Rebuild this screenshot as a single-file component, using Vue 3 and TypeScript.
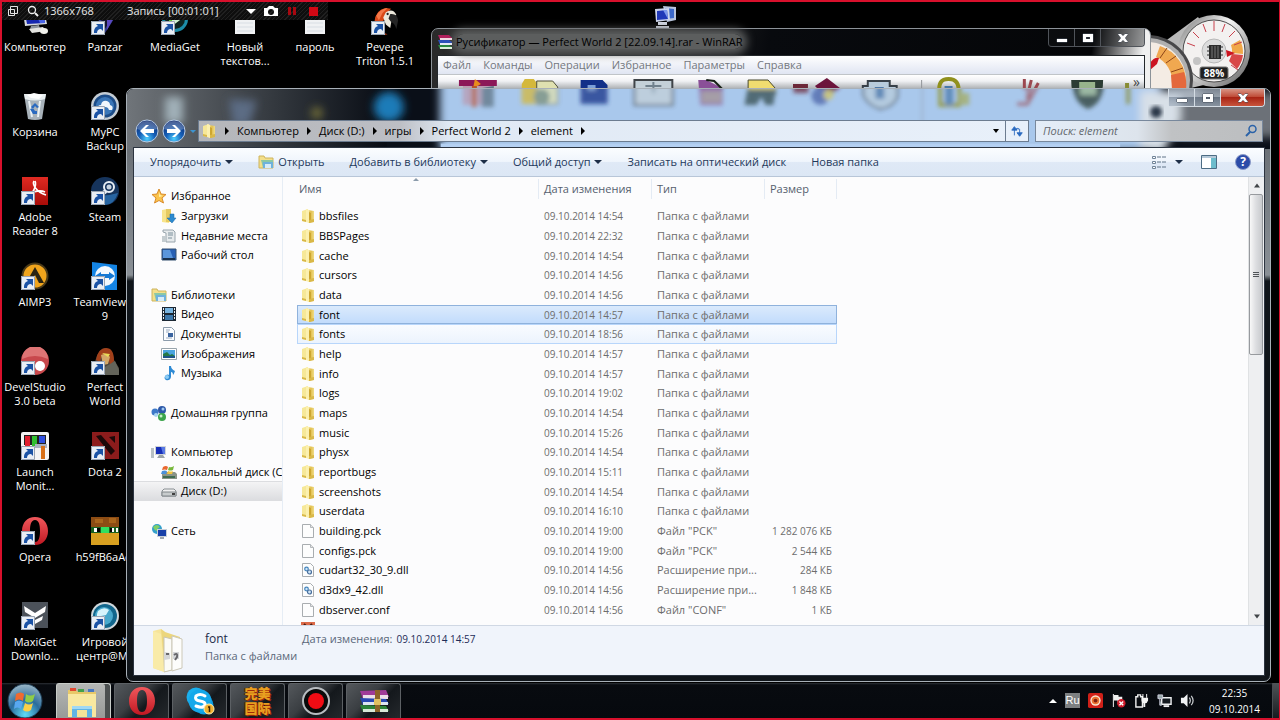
<script setup lang="ts">
import { ref } from 'vue'

interface Shortcut { label: string; icon: string; arrow?: boolean }
interface NavItem { label: string; icon: string; level?: number; active?: boolean; gap?: boolean }
interface FileRow { name: string; date: string; type: string; size?: string; icon: string; state?: string }

const columns: Shortcut[][] = [
  [
    { label: 'Компьютер', icon: 'computer' },
    { label: 'Корзина', icon: 'bin' },
    { label: 'Adobe\nReader 8', icon: 'adobe', arrow: true },
    { label: 'AIMP3', icon: 'aimp', arrow: true },
    { label: 'DevelStudio\n3.0 beta', icon: 'devel', arrow: true },
    { label: 'Launch\nMonit...', icon: 'launch', arrow: true },
    { label: 'Opera', icon: 'opera', arrow: true },
    { label: 'MaxiGet\nDownlo...', icon: 'maxi', arrow: true },
  ],
  [
    { label: 'Panzar', icon: 'panzar', arrow: true },
    { label: 'MyPC\nBackup', icon: 'mypc', arrow: true },
    { label: 'Steam', icon: 'steam', arrow: true },
    { label: 'TeamViewer\n9', icon: 'team', arrow: true },
    { label: 'Perfect\nWorld', icon: 'perfect', arrow: true },
    { label: 'Dota 2', icon: 'dota', arrow: true },
    { label: 'h59fB6aAeI', icon: 'skin' },
    { label: 'Игровой\nцентр@Ma', icon: 'game', arrow: true },
  ],
  [{ label: 'MediaGet', icon: 'media', arrow: true }],
  [{ label: 'Новый\nтекстов...', icon: 'text' }],
  [{ label: 'пароль', icon: 'text' }],
  [{ label: 'Pevepe\nTriton 1.5.1', icon: 'parrot', arrow: true }],
]

const rarMenu = ['Файл', 'Команды', 'Операции', 'Избранное', 'Параметры', 'Справка']
const crumbs = ['Компьютер', 'Диск (D:)', 'игры', 'Perfect World 2', 'element']
const commands = [
  { label: 'Упорядочить', drop: true },
  { label: 'Открыть', icon: 'library' },
  { label: 'Добавить в библиотеку', drop: true },
  { label: 'Общий доступ', drop: true },
  { label: 'Записать на оптический диск' },
  { label: 'Новая папка' },
]

const nav: NavItem[] = [
  { label: 'Избранное', icon: 'star' },
  { label: 'Загрузки', icon: 'downloads', level: 1 },
  { label: 'Недавние места', icon: 'recent', level: 1 },
  { label: 'Рабочий стол', icon: 'screen', level: 1 },
  { label: '', icon: '', gap: true },
  { label: 'Библиотеки', icon: 'library' },
  { label: 'Видео', icon: 'video', level: 1 },
  { label: 'Документы', icon: 'document', level: 1 },
  { label: 'Изображения', icon: 'picture', level: 1 },
  { label: 'Музыка', icon: 'music', level: 1 },
  { label: '', icon: '', gap: true },
  { label: 'Домашняя группа', icon: 'homegroup' },
  { label: '', icon: '', gap: true },
  { label: 'Компьютер', icon: 'pc' },
  { label: 'Локальный диск (C:)', icon: 'sysdisk', level: 1 },
  { label: 'Диск (D:)', icon: 'disk', level: 1, active: true },
  { label: '', icon: '', gap: true },
  { label: 'Сеть', icon: 'network' },
]

const folder = (name: string, time: string, state = ''): FileRow => ({
  name, date: `09.10.2014 ${time}`, type: 'Папка с файлами', icon: 'folder', state,
})
const files: FileRow[] = [
  folder('bbsfiles', '14:54'),
  folder('BBSPages', '22:32'),
  folder('cache', '14:54'),
  folder('cursors', '14:56'),
  folder('data', '14:56'),
  folder('font', '14:57', 'selected'),
  folder('fonts', '18:56', 'hovered'),
  folder('help', '14:57'),
  folder('info', '14:57'),
  folder('logs', '19:02'),
  folder('maps', '14:54'),
  folder('music', '15:26'),
  folder('physx', '14:54'),
  folder('reportbugs', '15:11'),
  folder('screenshots', '14:54'),
  folder('userdata', '16:10'),
  { name: 'building.pck', date: '09.10.2014 19:00', type: 'Файл "PCK"', size: '1 282 076 КБ', icon: 'file' },
  { name: 'configs.pck', date: '09.10.2014 19:00', type: 'Файл "PCK"', size: '2 544 КБ', icon: 'file' },
  { name: 'cudart32_30_9.dll', date: '09.10.2014 14:56', type: 'Расширение при...', size: '284 КБ', icon: 'dll' },
  { name: 'd3dx9_42.dll', date: '09.10.2014 14:56', type: 'Расширение при...', size: '1 848 КБ', icon: 'dll' },
  { name: 'dbserver.conf', date: '09.10.2014 14:56', type: 'Файл "CONF"', size: '1 КБ', icon: 'file' },
]

const query = ref('')
const tasks = [
  { name: 'Проводник', icon: 'explorer', current: true },
  { name: 'Opera', icon: 'opera' },
  { name: 'Skype', icon: 'skype' },
  { name: 'Perfect World', icon: '' },
  { name: 'Запись экрана', icon: 'record' },
  { name: 'WinRAR', icon: 'books' },
]
const tray = ['trayred', 'trayflag', 'trayplug', 'traynet', 'traysound']
</script>

<template>
  <svg class="defs" aria-hidden="true">
    <defs>
      <linearGradient id="gFolder" x1="0" x2="1"><stop offset="0" stop-color="#f4e08a" /><stop offset=".5" stop-color="#e2c050" /><stop offset="1" stop-color="#efdc88" /></linearGradient>
      <radialGradient id="gBlue" cx=".5" cy=".85" r=".8"><stop offset="0" stop-color="#4fd0ff" /><stop offset=".45" stop-color="#1660b8" /><stop offset="1" stop-color="#0d2a70" /></radialGradient>
      <radialGradient id="gOrb" cx=".5" cy=".9" r=".9"><stop offset="0" stop-color="#5fdcf8" /><stop offset=".5" stop-color="#2a6c9c" /><stop offset="1" stop-color="#9cb8c8" /></radialGradient>
      <linearGradient id="gOpera" x1="0" y1="0" x2="0" y2="1"><stop offset="0" stop-color="#f0585c" /><stop offset="1" stop-color="#c01822" /></linearGradient>
      <linearGradient id="gRed" x1="0" y1="0" x2="0" y2="1"><stop offset="0" stop-color="#e02a22" /><stop offset="1" stop-color="#a80c08" /></linearGradient>
      <linearGradient id="gSilver" x1="0" y1="0" x2="1" y2="1"><stop offset="0" stop-color="#6c6c6c" /><stop offset=".4" stop-color="#f4f4f4" /><stop offset="1" stop-color="#5a5a5a" /></linearGradient>
      <linearGradient id="gLeft" x1="0" x2="1"><stop offset="0" stop-color="#70757a" /><stop offset=".6" stop-color="#30353b" /><stop offset="1" stop-color="#080c14" /></linearGradient>
      <filter id="soft" x="-10%" y="-30%" width="120%" height="160%"><feGaussianBlur stdDeviation="4" /></filter>
    </defs>

    <symbol id="shortcut" viewBox="0 0 14 14"><path d="M0 0h14v14H0z" fill="#e9eef5" /><path d="M.5.5h13v13H.5z" fill="none" stroke="#9aa4b2" /><path d="M3 12c0-4 1-6 4-7L5 3h7v7L10 8c-3 0-4 2-4 4z" fill="#1b52a4" /></symbol>

    <symbol id="computer" viewBox="0 0 28 28"><path d="M2 4l21-2 3 15-22 2z" fill="#d5d9de" /><path d="M4 6l18-2 2 12-18 1z" fill="#1527b0" /><path d="M14 5l8-1 2 12-5 0z" fill="#4a64e8" /><path d="M10 19l8-1 1 4H9z" fill="#8c949c" /><path d="M8 22l14-2 3 4-14 2z" fill="#e4e4e0" /><ellipse cx="23" cy="24" rx="4" ry="3" fill="#f1f1ec" /></symbol>
    <symbol id="bin" viewBox="0 0 28 28"><path d="M3 2h22l-4 25q-7 2-14 0z" fill="#a8b2ba" /><path d="M3 2h22l-1 5q-10 3-20 0z" fill="#e8eef0" /><path d="M6 3l7-2 9 2-4 4-8-1z" fill="#fff" /><path d="M8 9l3 16M19 9l-2 16" stroke="#e8f0f4" stroke-width="2" /><path d="M10 15l4-4 4 4-2 1-2-2-2 3zM9 17l3 5h4v-3h-2l-2-3z" fill="#2a6ac0" /></symbol>
    <symbol id="adobe" viewBox="0 0 28 28"><path d="M1 0h26v28H1z" fill="url(#gRed)" /><path d="M13 4c-2 3 2 11 12 14M14 4c2 4-2 13-8 18M8 17c6-3 12-4 16-2" fill="none" stroke="#fff" stroke-width="1.6" /></symbol>
    <symbol id="aimp" viewBox="0 0 28 28"><circle cx="14" cy="14" r="12.500" fill="#f0a41c" stroke="#4a3a18" stroke-width="2" /><path d="M14 5l9 16h-5l-4-8-4 8H5z" fill="#2a2412" /></symbol>
    <symbol id="devel" viewBox="0 0 28 28"><circle cx="14" cy="14" r="14" fill="#c8484c" /><path d="M1 12A13 13 0 0 1 27 12Q14 6 1 12" fill="#de7474" /><circle cx="19" cy="19" r="5" fill="#fff" /></symbol>
    <symbol id="launch" viewBox="0 0 28 28"><rect width="28" height="28" rx="2" fill="#f4f4f4" /><path d="M3 3h22v10H3z" fill="#222" /><path d="M4 4h5v10H4z" fill="#e02030" /><path d="M11 4h5v12h-5z" fill="#30c030" /><path d="M18 4h6v7h-6z" fill="#3050e0" /><path d="M14 12h12v4H14z" fill="#a8b0c0" /><path d="M20 14h4v13h-4z" fill="#d87018" /></symbol>
    <symbol id="opera" viewBox="0 0 28 28"><path fill-rule="evenodd" d="M14 0C6 0 1 6 1 14s5 14 13 14 13-6 13-14S22 0 14 0zm0 3c4 0 5 5 5 11s-1 11-5 11-5-5-5-11 1-11 5-11z" fill="url(#gOpera)" /></symbol>
    <symbol id="maxi" viewBox="0 0 28 28"><path d="M1 0h26v26H1z" fill="#4c525a" /><path d="M3 4l11 7 11-7-1 6-10 6L4 10zM6 14l8 4 8-4-1 4-7 4-7-4z" fill="#fff" /></symbol>
    <symbol id="panzar" viewBox="0 0 28 28"><path d="M2 2l26 2-14 22z" fill="#343a8c" /><path d="M8 5l17 1-12 17z" fill="#14162e" /><path d="M16 8l9-1-9 16z" fill="#5a48c0" /></symbol>
    <symbol id="mypc" viewBox="0 0 28 28"><circle cx="14" cy="14" r="14" fill="#c4ccd4" /><circle cx="14" cy="14" r="11.500" fill="#1c4c88" /><circle cx="14" cy="14" r="9" fill="#3a76b8" /><path d="M7 17q-1-4 3-4 1-5 6-4 3 1 3 4 4 1 2 5h-3l-1-2q-3-2-5 0l-1 2z" fill="#f0f6fc" /></symbol>
    <symbol id="steam" viewBox="0 0 28 28"><circle cx="14" cy="14" r="14" fill="#16345c" /><path d="M1 18q13 2 26-2-4 12-13 12T1 18" fill="#2764a0" /><circle cx="18" cy="10" r="5" fill="none" stroke="#e8eef4" stroke-width="2" /><circle cx="18" cy="10" r="2.500" fill="#c8d4e0" /><path d="M15 14l-7 5" stroke="#e8eef4" stroke-width="4" /><circle cx="9" cy="19" r="3" fill="#e8eef4" /></symbol>
    <symbol id="team" viewBox="0 0 28 28"><path d="M1 0l25 3v25H1z" fill="#1484e4" /><circle cx="14" cy="14" r="10" fill="#f2f8fe" /><path d="M4 14l6-4v2h8v-2l6 4-6 4v-2h-8v2z" fill="#1478d4" /></symbol>
    <symbol id="perfect" viewBox="0 0 28 28"><path d="M3 28Q3 4 14 1q8 1 9 12l5 8v7z" fill="#4c463c" /><path d="M5 13Q7 1 15 1t8 13l-4 4-2-8-6-2-2 7z" fill="#a2401a" /><path d="M10 8q6-3 9 2l-2 7-5 1z" fill="#d4a868" /><path d="M11 6l8 1-2 3z" fill="#e8dc58" /><path d="M14 20l10-6 4 9v5H14z" fill="#64645a" /></symbol>
    <symbol id="dota" viewBox="0 0 28 28"><path d="M1 0h27v27H1z" fill="#8c1c1c" /><path d="M5 4l5-1 14 16-4 4zM18 5l6-1v7zM4 16l8 8H4z" fill="#1c0808" /></symbol>
    <symbol id="skin" viewBox="0 0 28 28"><path d="M0 0h28v28H0z" fill="#d8a020" /><path d="M0 0h28v10H0z" fill="#8c4c14" /><path d="M4 2h8v4H4zM18 1h7v5h-7z" fill="#a8641c" /><path d="M0 10h28v6H0z" fill="#186020" /><path d="M10 10h8v6h-8z" fill="#30e060" /><path d="M3 11h3v4H3zM21 11h2v4h-2zM25 11h2v4h-2z" fill="#fff" /><path d="M6 11h3v4H6zM19 11h2v4h-2z" fill="#000" /></symbol>
    <symbol id="game" viewBox="0 0 28 28"><circle cx="14" cy="14" r="14" fill="#d0d8dc" /><circle cx="14" cy="14" r="12" fill="#12668c" /><circle cx="13" cy="14" r="9" fill="#48a8cc" /><path d="M7 9q6-5 11-1l-3 5-5 1-1 7q-5-6-2-12" fill="#d6f4fc" /></symbol>
    <symbol id="media" viewBox="0 0 28 28"><circle cx="14" cy="12" r="13" fill="#1c8ca8" /><circle cx="14" cy="12" r="10" fill="#0e2420" /><path d="M8 3l12 9-12 9z" fill="#64c83c" /><path d="M11 9l8 4-8 6z" fill="#d0f0d4" /></symbol>
    <symbol id="text" viewBox="0 0 28 28"><path d="M4 0h20v27H4z" fill="#f0f2f4" /><path d="M6 16h16M6 20h16M6 24h16" stroke="#d8dee4" /></symbol>
    <symbol id="parrot" viewBox="0 0 32 32"><path d="M4 17Q5 3 17 1l6 1-5 5-4 9 2 8-3 5 6 2-5 1-7-3Q3 25 4 17" fill="#d84818" /><path d="M6 10q4-8 13-9l-6 6-4 8z" fill="#f47848" /><path d="M17 6q8-5 12 3l-5 3-2 12-5-4-3-8z" fill="#ece8dc" /><path d="M22 8q8-1 9 7l-2 10q-2-7-6-8l-3-4z" fill="#242424" /><circle cx="19" cy="8" r="1.300" fill="#222" /></symbol>

    <symbol id="folder" viewBox="0 0 14 16"><path d="M1 3l6-2v13l-6-1z" fill="#f6e898" /><path d="M7 2l6 1v11l-6 1z" fill="url(#gFolder)" /><path d="M5 1l3 1v13l-3-1z" fill="#fbf0b0" /><path d="M8 4l2 1v9l-2 1z" fill="#cda630" /><path d="M1 11l4 1v2l-4-1zM8 12l5-1v3l-5 1z" fill="#d9b848" /></symbol>
    <symbol id="file" viewBox="0 0 14 16"><path d="M1.500 1.500h8l3 3v10h-11z" fill="#fdfdfd" stroke="#a9adb0" /><path d="M9.500 1.500v3h3" fill="#e4e4e4" stroke="#b4b8bc" /></symbol>
    <symbol id="dll" viewBox="0 0 14 16"><path d="M1.500 1.500h8l3 3v10h-11z" fill="#fdfdfd" stroke="#a9adb0" /><circle cx="5.500" cy="7" r="1.800" fill="#cfe6f8" stroke="#4484bc" stroke-width="1.200" /><circle cx="8.500" cy="10" r="2" fill="#cfe6f8" stroke="#4a6f9c" stroke-width="1.200" /></symbol>
    <symbol id="orangefile" viewBox="0 0 14 16"><path d="M0 1h14v14H0z" fill="#dc6a48" /><path d="M3 3l2 2M9 5l2-2" stroke="#4a1c10" stroke-width="2" /></symbol>

    <symbol id="star" viewBox="0 0 16 16"><path d="M8 1l2 5 5 .5-4 3.500 1.500 5L8 12.500 3.500 15 5 10 1 6.500 6 6z" fill="#fbc44c" stroke="#d88a2c" /><path d="M8 4l1 3 3 1-4 1z" fill="#fff0a8" /></symbol>
    <symbol id="downloads" viewBox="0 0 16 16"><path d="M1 2l5-1 2 1v13l-7-1z" fill="#f8e48c" /><path d="M5 1h5v13H5z" fill="#e6ca60" /><path d="M9 6h4v4h2l-4 5-5-5h3z" fill="#2c8ad0" stroke="#1a68a8" stroke-width=".5" /></symbol>
    <symbol id="recent" viewBox="0 0 16 16"><path d="M2 2h10l2 2v10H5V5L2 4z" fill="#e6eaec" stroke="#98a4ac" /><path d="M7 5h5M7 7h5M7 10h4" stroke="#7c909c" /><path d="M1 8h4v6H1z" fill="#c4ccd0" /></symbol>
    <symbol id="screen" viewBox="0 0 16 16"><path d="M1 2h14v11H1z" fill="#2860b4" stroke="#345070" /><path d="M2 3h7l3 8H2z" fill="#5a96dc" /><path d="M2 11h12v2H2z" fill="#18304c" /></symbol>
    <symbol id="library" viewBox="0 0 16 16"><path d="M1 2h5l1 2h8v10H1z" fill="#f3df8a" stroke="#ceb45c" /><path d="M3 6h12v8H5z" fill="#8cc8a4" /><path d="M5 8h10v6H5z" fill="#6eb2dc" /><path d="M7 10h6v4H7z" fill="#d8ecf8" /></symbol>
    <symbol id="video" viewBox="0 0 16 16"><path d="M1 1h14v14H1z" fill="#1c2834" /><path d="M4 2h8v5H4z" fill="#78b4e0" /><path d="M4 9h8v5H4z" fill="#3c78ac" /><path d="M2 3h1M2 6h1M2 9h1M2 12h1M13 3h1M13 6h1M13 9h1M13 12h1" stroke="#e8eef4" stroke-width="2" /></symbol>
    <symbol id="document" viewBox="0 0 16 16"><path d="M2.500 1.500h8l3 3v10h-11z" fill="#fafcff" stroke="#8c9cac" /><path d="M5 4h4M5 6h3M5 12h6" stroke="#9cacc0" /><path d="M7 7h5v4H7z" fill="#3a64a0" /></symbol>
    <symbol id="picture" viewBox="0 0 16 16"><path d="M.5 2.500h15v11H.5z" fill="#fff" stroke="#98a4ac" /><path d="M2 4h12v8H2z" fill="#4aa4e0" /><path d="M2 8l4-2 3 3 2-1 3 2v2H2z" fill="#247848" /><path d="M2 10h12v2H2z" fill="#1c548c" /></symbol>
    <symbol id="music" viewBox="0 0 16 16"><path d="M8 1h2q0 3 4 5-1 3-2 4 0-3-2-3v5q-1 4-5 3-3-2 0-5 2-1 3 0z" fill="#2e8ad4" /><circle cx="6" cy="12" r="2" fill="#8cccf4" /></symbol>
    <symbol id="homegroup" viewBox="0 0 16 16"><circle cx="4" cy="7" r="3.500" fill="#3c78c8" /><circle cx="11" cy="5" r="4" fill="#2d58a8" /><circle cx="11" cy="12" r="4" fill="#3ca44c" /><circle cx="5" cy="10" r="2" fill="#a8d4f0" /><circle cx="10" cy="11" r="1.500" fill="#c8f0c8" /><circle cx="12" cy="4" r="1.500" fill="#a0c8f0" /></symbol>
    <symbol id="pc" viewBox="0 0 16 16"><path d="M0 4h3v10H0z" fill="#b8c0c4" /><path d="M4 2h11v9H4z" fill="#d0d4d8" /><path d="M5 3h9v7H5z" fill="#1830b8" /><path d="M10 3h4v7h-2z" fill="#5878e4" /><path d="M8 11h4l2 3H6z" fill="#9ca4a8" /></symbol>
    <symbol id="sysdisk" viewBox="0 0 16 16"><path d="M1 10l2-2h11l2 2v5H1z" fill="#8a9488" /><path d="M2 12h12v2H2z" fill="#406c50" /><path d="M2 3q3-2 5 0L6 6Q4 5 1 6z" fill="#e86830" /><path d="M8 3q2 1 5-1l-1 4q-3 1-5 0z" fill="#78b83c" /><path d="M1 7q3-1 5 0l-1 3H0z" fill="#4c90d8" /><path d="M7 7q3 1 5 0l-1 3H6z" fill="#f4c43c" /></symbol>
    <symbol id="disk" viewBox="0 0 16 16"><path d="M1 8l2-2h10l2 2v5H1z" fill="#f0f0f0" stroke="#888e92" /><path d="M1 9h14v4H1z" fill="#c8cccd" stroke="#80868a" /><path d="M11 11h3" stroke="#404040" stroke-width="2" /></symbol>
    <symbol id="network" viewBox="0 0 16 16"><circle cx="6" cy="6" r="5" fill="#34a0cc" /><path d="M2 4q4-4 7 0-3 1-3 4-3-1-4-4" fill="#80d068" /><path d="M6 6h10v8H6z" fill="#c8d0d8" /><path d="M7 7h8v6H7z" fill="#1840a8" /><path d="M9 14h4v2H9z" fill="#a0a8b0" /></symbol>

    <symbol id="explorer" viewBox="0 0 32 32"><path d="M2 5h8l2 2h18v25H2z" fill="#e8c868" /><path d="M4 3h6v3H4z" fill="#e04830" /><path d="M12 4h6v3h-6z" fill="#44a04c" /><path d="M22 4h6v3h-6z" fill="#4878c0" /><path d="M2 9h28v23H2z" fill="#f8e8a0" /><path d="M6 21h20v11H6z" fill="#60b4e4" /><path d="M11 25h10v7H11z" fill="#f4e498" /><path d="M6 21h20v3H6z" fill="#a0d8f4" /></symbol>
    <symbol id="skype" viewBox="0 0 28 28"><circle cx="10" cy="10" r="9.500" fill="#1ab0ee" /><circle cx="18" cy="18" r="9.500" fill="#0c9ce0" /><circle cx="14" cy="14" r="11.500" fill="#14a8ea" /><path d="M19 9q-5-3-9 0-2 4 4 5 6 1 5 4-2 4-9 1" fill="none" stroke="#fff" stroke-width="3" stroke-linecap="round" /><circle cx="23" cy="22" r="5" fill="#f0b030" stroke="#fff0b0" /><path d="M22 20h1.500v5" fill="none" stroke="#3a2000" stroke-width="1.500" /></symbol>
    <symbol id="record" viewBox="0 0 28 28"><circle cx="14" cy="14" r="13" fill="#0a0a0a" stroke="#b8bcc0" stroke-width="2" /><circle cx="14" cy="14" r="8" fill="#f00c14" /></symbol>
    <symbol id="books" viewBox="0 0 32 28"><path d="M2 4l26-1 3 7-26 2z" fill="#a03c98" /><path d="M5 8h25v4H5z" fill="#ece0e8" /><path d="M2 11l26 1 3 5-26 1z" fill="#2848b0" /><path d="M5 15h25v3H5z" fill="#dce4f0" /><path d="M2 18l26 1 3 5-26 1z" fill="#2c8438" /><path d="M5 22h25v3H5z" fill="#d8e8d8" /><path d="M17 3h5v22h-5z" fill="#8c6428" /><path d="M16 12h7v6h-7z" fill="#e0c060" /></symbol>
    <symbol id="rarlogo" viewBox="0 0 16 16"><path d="M1 1h11l3 3-1 2H3z" fill="#b0205c" /><path d="M3 4h12v2H3z" fill="#f0d8e0" /><path d="M1 6h11l3 2-1 3H3z" fill="#2c50b8" /><path d="M3 9h12v2H3z" fill="#e4e8f4" /><path d="M1 11h11l3 2-1 2H3z" fill="#2a8840" /><path d="M3 13h12v2H3z" fill="#dcf0dc" /></symbol>

    <symbol id="trayred" viewBox="0 0 16 16"><rect width="16" height="16" rx="2" fill="#d02018" /><circle cx="8" cy="8" r="5.500" fill="#f8e4d0" /><circle cx="8" cy="8" r="4" fill="#e87030" /><circle cx="8" cy="8" r="2" fill="#802010" /></symbol>
    <symbol id="trayflag" viewBox="0 0 16 16"><path d="M2 1h1v14H2z" fill="#fff" /><path d="M3 2h5v2h4v6H7V8H3z" fill="#f0f0f0" /><circle cx="11" cy="11" r="4.500" fill="#d01c2c" /><path d="M9 9l4 4M13 9l-4 4" stroke="#fff" stroke-width="1.500" /></symbol>
    <symbol id="trayplug" viewBox="0 0 16 16"><path d="M2 4h2V2h3v2h2v11H2z" fill="none" stroke="#f0f0f0" stroke-width="1.500" /><path d="M8 5h7v3q-1 3-3 3v4h-2v-4q-2-1-2-3z" fill="#f4f4f4" /><path d="M9 1h1v4H9zM13 1h1v4h-1z" fill="#fff" /></symbol>
    <symbol id="traynet" viewBox="0 0 16 16"><path d="M5 5h10v7H5z" fill="#141a20" stroke="#eef0f2" stroke-width="1.500" /><path d="M7 14h6" stroke="#eef0f2" stroke-width="2" /><path d="M1 2h5v4H1zM3 6v7h2" fill="#9aa" stroke="#ccd" /></symbol>
    <symbol id="traysound" viewBox="0 0 16 16"><path d="M1 5h3l4-4v14l-4-4H1z" fill="#f0f2f4" /><path d="M10 5q2 3 0 6M12 3q4 5 0 10" fill="none" stroke="#c8ccd0" stroke-width="1.300" /></symbol>

    <symbol id="rartools" viewBox="0 0 720 60">
      <path d="M27 8h38v6H27z" fill="#8c1858" /><path d="M43 7l6 5-8 5z" fill="#e88c1c" /><path d="M31 14h30v20H31z" fill="#ba9ab0" /><path d="M40 14h5v22h-5z" fill="#b85828" /><path d="M50 16l12-2v22H50z" fill="#5e7484" />
      <path d="M90 12l3-5h9l3 4v22H90z" fill="#d4b83c" /><path d="M105 9h16l5 6v18h-21z" fill="#dfe0b0" stroke="#50503c" /><circle cx="110" cy="26" r="8" fill="#7c9078" />
      <path d="M149 8h22l5 5v20h-27z" fill="#123088" /><path d="M156 13h8v6h-8z" fill="#7ca0d8" />
      <path d="M203 8h38v26h-38z" fill="#c4d0d8" stroke="#404448" stroke-width="2" /><path d="M214 14h16M222 10v12" stroke="#70808c" stroke-width="2" />
      <path d="M267 8h8l16 8v18h-22z" fill="#8a5098" /><path d="M275 8l8 1 8 8" stroke="#182018" stroke-width="2" fill="none" /><path d="M270 20h20v12h-20z" fill="#a49090" />
      <path d="M317 8h20l7 8v8h-27z" fill="#f0dc70" stroke="#48482c" /><path d="M316 18h28l-2 16h-8l-4-8-5 8h-12z" fill="#344e50" />
      <path d="M362 12h15v10h-15z" fill="#6c2838" /><path d="M384 14l12-8 13 10-13 10z" fill="#6c143c" /><circle cx="389" cy="25" r="9" fill="#4c64a8" /><circle cx="397" cy="24" r="5" fill="#d0c460" />
      <path d="M437 9h22v5h7v12q-4 10-17 12-13-4-17-14V14h5z" fill="#b8ccdc" stroke="#384048" stroke-width="2" /><path d="M444 15h9v13h-9z" fill="#4c78a8" />
      <path d="M491 8v52" stroke="#909498" />
      <path d="M509 20q-2-13 9-13t10 13v14h-19z" fill="none" stroke="#90901c" stroke-width="4" /><path d="M514 14h8v20h-8z" fill="#4878a8" /><path d="M528 22h10v12h-10z" fill="#a4ac60" />
      <path d="M594 7v12M601 8l-5 20M608 11l-12 22h-10" stroke="#9c4850" stroke-width="3" fill="none" />
      <path d="M641 8h32q0 24-16 30-16-6-16-30z" fill="#2c3c34" /><path d="M649 10h16v14h-16z" fill="#98b48c" />
      <path d="M697 11v22" stroke="#888c34" stroke-width="4" />
    </symbol>
  </svg>

  <main class="desktop">
    <section class="shortcuts" aria-label="Рабочий стол">
      <div v-for="(col, c) in columns" :key="c" class="shortcut-col">
        <button v-for="s in col" :key="s.label" class="shortcut">
          <span class="shortcut-art">
            <svg class="icon28"><use :href="'#' + s.icon" /></svg>
            <svg v-if="s.arrow" class="arrow-badge"><use href="#shortcut" /></svg>
          </span>
          <span class="shortcut-label">{{ s.label }}</span>
        </button>
      </div>
    </section>

    <svg class="net-shortcut" viewBox="0 0 22 24" aria-hidden="true"><path d="M8 0l13 1v13l-9 2z" fill="#b8c4dc" /><path d="M10 2l9 1v9l-8 1z" fill="#3c68c8" /><path d="M0 3l14-1 1 12-14 2z" fill="#ccd4ec" /><path d="M2 5l10-1 1 9-11 1z" fill="#2038b8" /><path d="M8 4l4 0 1 9z" fill="#7c98ec" /><path d="M3 16h9v3H3zM1 20h13v2H1z" fill="#d8dce8" /></svg>

    <svg class="gauge" viewBox="1150 12 106 84" aria-hidden="true">
      <path d="M1160 45l38-28 40 60-60 14z" fill="#b8b8b8" />
      <circle cx="1214" cy="51" r="36" fill="url(#gSilver)" />
      <circle cx="1214" cy="51" r="31" fill="#f3f1f0" stroke="#4c4c4c" />
      <path d="M1240 40a28 28 0 0 1 3 14l-11-1a18 18 0 0 0-1-8z" fill="#f0a848" /><path d="M1243 55a28 28 0 0 1-6 14l-8-8 3-7z" fill="#d84848" />
      <path d="M1214 21v10M1203 24l3 8M1225 24l-3 8M1193 32l6 6M1235 31l-6 6M1187 43l8 3M1242 42l-8 3M1238 70l-7-5" stroke="#c8404c" stroke-width="1" />
      <circle cx="1214" cy="51" r="12" fill="#dcdcdc" stroke="#b8b8b8" /><path d="M1209 45h12v14h-12z" fill="#2c2c2c" /><path d="M1207 47h16M1207 51h16M1207 55h16" stroke="#2c2c2c" /><path d="M1212 46v12M1215 46v12M1218 46v12" stroke="#777" />
      <path d="M1226 50l9 3-8 4z" fill="#cc1420" /><circle cx="1197" cy="61" r="4" fill="#c4c4c4" />
      <rect x="1200" y="67" width="28" height="12" rx="2" fill="#202020" stroke="#777" /><text x="1214" y="77" text-anchor="middle" font-family="Open Sans, sans-serif" font-weight="700" font-size="10" fill="#fff">88%</text>
      <circle cx="1148" cy="80" r="45" fill="#48484a" /><circle cx="1148" cy="80" r="42" fill="#b0b0b0" /><circle cx="1148" cy="80" r="38" fill="#f4ece4" />
      <path d="M1160 46a38 38 0 0 1 26 37l-14 0a26 26 0 0 0-16-26z" fill="#f0a850" /><path d="M1184 72a38 38 0 0 1 2 18h-14l-1-15z" fill="#e4683c" />
      <path d="M1160 58l7-10M1166 63l10-7M1171 72l12-4" stroke="#8c4418" /><path d="M1150 63q4-6 9-5l-2 6-7 6z" fill="#cc1420" />
    </svg>

    <section class="window rar" aria-label="WinRAR">
      <header class="rar-title">
        <svg class="rar-logo"><use href="#rarlogo" /></svg>
        <h2><span>Русификатор — Perfect World 2 [22.09.14].rar - WinRAR</span></h2>
        <div class="win-buttons dark">
          <button aria-label="Свернуть"><svg viewBox="0 0 12 12"><path d="M1 7h10v3H1z" /></svg></button>
          <button aria-label="Развернуть"><svg viewBox="0 0 12 12"><path fill-rule="evenodd" d="M1 2h10v8H1zm3 3v2h4V5z" /></svg></button>
          <button class="close" aria-label="Закрыть"><svg viewBox="0 0 12 12"><path d="M1 2h3l2 2 2-2h3L8 6l3 4H8L6 8l-2 2H1l3-4z" /></svg></button>
        </div>
      </header>
      <div class="rar-body">
        <nav class="rar-menu"><button v-for="m in rarMenu" :key="m">{{ m }}</button></nav>
        <div class="rar-tools"><svg viewBox="6 0 708 60" preserveAspectRatio="none"><use href="#rartools" width="720" height="60" /></svg><span>»</span></div>
      </div>
    </section>

    <section class="window explorer" aria-label="element">
      <svg class="glass" viewBox="126 88 1144 60" preserveAspectRatio="none" aria-hidden="true">
        <filter id="toolblur"><feGaussianBlur stdDeviation="2" /></filter>
        <path d="M126 88h1144v60H126z" fill="#0a0f18" />
        <path d="M126 88h260v60H126z" fill="url(#gLeft)" />
        <g filter="url(#soft)">
          <path d="M439 70h722v80H439z" fill="#a9c8ec" />
          <path d="M1140 90h34l26-2-18 30-20 34-22-4z" fill="#d8e0e8" />
          <path d="M1180 92h100v44h-100z" fill="#6c7178" />
          <path d="M164 96h18v26h-18z" fill="#a0b0b8" />
          <path d="M228 98l28 2-8 24h-16z" fill="#5c6c84" />
          <circle cx="388" cy="106" r="15" fill="#1c7cb8" />
          <circle cx="316" cy="112" r="6" fill="#706c38" />
        </g>
        <svg x="431" y="70" width="720" height="60" opacity=".75"><use href="#rartools" width="720" height="60" filter="url(#toolblur)" /></svg>
        <path d="M440 145h680" stroke="#b4d0f2" stroke-width="5" />
        <circle cx="1156" cy="111" r="6" fill="#2c3848" filter="url(#toolblur)" />
      </svg>
      <header class="ex-title">
        <div class="win-buttons">
          <button aria-label="Свернуть"><svg viewBox="0 0 12 12"><path d="M1 7h10v3H1z" /></svg></button>
          <button aria-label="Развернуть"><svg viewBox="0 0 12 12"><path fill-rule="evenodd" d="M1 2h10v8H1zm3 3v2h4V5z" /></svg></button>
          <button class="close" aria-label="Закрыть"><svg viewBox="0 0 12 12"><path d="M1 2h3l2 2 2-2h3L8 6l3 4H8L6 8l-2 2H1l3-4z" /></svg></button>
        </div>
      </header>
      <div class="address-row">
        <div class="travel">
          <button aria-label="Назад"><svg viewBox="0 0 24 24"><circle cx="12" cy="12" r="11" fill="url(#gBlue)" stroke="#b8cce4" /><path d="M2 10Q4 2 12 2t10 8Q12 14 2 10" fill="#fff" opacity=".25" /><path d="M5 12l6-6h3l-4 4h9v4h-9l4 4h-3z" fill="#fff" /></svg></button>
          <button aria-label="Вперёд"><svg viewBox="0 0 24 24"><circle cx="12" cy="12" r="11" fill="url(#gBlue)" stroke="#b8cce4" /><path d="M2 10Q4 2 12 2t10 8Q12 14 2 10" fill="#fff" opacity=".25" /><path d="M19 12l-6-6h-3l4 4H5v4h9l-4 4h3z" fill="#fff" /></svg></button>
          <button class="recent-btn" aria-label="Последние страницы"><svg viewBox="0 0 8 8"><path d="M1 3h6L4 6z" fill="#3c94d0" /></svg></button>
        </div>
        <div class="address">
          <svg class="addr-icon"><use href="#folder" /></svg>
          <template v-for="c in crumbs" :key="c">
            <svg class="crumb-arrow" viewBox="0 0 20 10"><path d="M8 1l4 4-4 4z" /></svg>
            <button class="crumb">{{ c }}</button>
          </template>
          <svg class="crumb-arrow" viewBox="0 0 20 10"><path d="M8 1l4 4-4 4z" /></svg>
          <button class="addr-drop" aria-label="Предыдущие расположения"><svg viewBox="0 0 8 8"><path d="M1 2h6L4 6z" /></svg></button>
          <button class="refresh" aria-label="Обновить"><svg viewBox="0 0 16 16"><path d="M5 13V6M2 7l3-4 3 4zM11 3" fill="#2a6ac0" stroke="#2a6ac0" /><path d="M11 13V6M8 10l3 4 3-4zM6 6q3-2 5 0" fill="#2a6ac0" stroke="#2a6ac0" /></svg></button>
        </div>
        <label class="search">
          <input v-model="query" type="text" placeholder="Поиск: element" aria-label="Поиск" />
          <svg viewBox="0 0 14 14"><circle cx="8.500" cy="5" r="3.500" fill="none" stroke="#2a62a8" stroke-width="1.500" /><path d="M6 8l-4 4" stroke="#2a62a8" stroke-width="2" /></svg>
        </label>
      </div>

      <div class="ex-body">
        <div class="commands">
          <button v-for="cmd in commands" :key="cmd.label">
            <svg v-if="cmd.icon" class="icon16"><use :href="'#' + cmd.icon" /></svg>
            {{ cmd.label }}
            <svg v-if="cmd.drop" class="caret" viewBox="0 0 8 8"><path d="M0 2h8L4 6z" /></svg>
          </button>
          <span class="grow"></span>
          <div class="view-tools">
            <button class="view-btn" aria-label="Вид"><svg class="icon16" viewBox="0 0 16 16"><path d="M1.500 2.500h3v2h-3zM1.500 7.500h3v2h-3zM1.500 12.500h3v2h-3z" fill="#fff" stroke="#708498" /><path d="M6 3h4M11 3h4M6 8h4M11 8h4M6 13h4M11 13h4" stroke="#607488" /></svg><svg class="caret" viewBox="0 0 8 8"><path d="M0 2h8L4 6z" /></svg></button>
            <button aria-label="Область просмотра"><svg class="icon16" viewBox="0 0 16 16"><path d="M.5 1.500h15v13H.5z" fill="#fff" stroke="#4c6c84" /><path d="M1 2h14v2H1z" fill="#b4c8d8" /><path d="M10 4h5v10h-5z" fill="#6cbccc" /></svg></button>
            <button aria-label="Справка"><svg class="icon16" viewBox="0 0 16 16"><circle cx="8" cy="8" r="7.500" fill="#2c4ca8" stroke="#8c9cc8" /><text x="8" y="12" text-anchor="middle" font-family="Open Sans, sans-serif" font-weight="700" font-size="12" fill="#fff">?</text></svg></button>
          </div>
        </div>

        <div class="panes">
          <nav class="tree">
            <template v-for="(n, i) in nav" :key="i">
              <span v-if="n.gap" class="tree-row"></span>
              <a v-else href="#" class="tree-row" :class="{ sub: n.level, active: n.active }">
                <svg class="icon16"><use :href="'#' + n.icon" /></svg><span>{{ n.label }}</span>
              </a>
            </template>
          </nav>

          <div class="list">
            <svg class="sort-mark" viewBox="0 0 8 4" aria-hidden="true"><path d="M0 4l4-4 4 4z" fill="#8c9cac" /></svg>
            <table>
              <colgroup><col class="c-name" /><col class="c-date" /><col class="c-type" /><col class="c-size" /></colgroup>
              <thead><tr><th><span>Имя</span></th><th><span>Дата изменения</span></th><th><span>Тип</span></th><th><span>Размер</span></th></tr></thead>
              <tbody>
                <tr v-for="f in files" :key="f.name" :class="f.state">
                  <td class="name"><div><svg class="file-icon"><use :href="'#' + f.icon" /></svg>{{ f.name }}</div></td>
                  <td class="date">{{ f.date }}</td><td>{{ f.type }}</td><td class="size">{{ f.size }}</td>
                </tr>
                <tr><td class="name"><div><svg class="file-icon"><use href="#orangefile" /></svg></div></td><td></td><td></td><td></td></tr>
              </tbody>
            </table>
          </div>

          <div class="scroll" aria-hidden="true">
            <svg viewBox="0 0 8 8"><path d="M1 6l3-4 3 4z" /></svg>
            <div class="track"><div class="thumb"><i></i><i></i><i></i></div></div>
            <svg viewBox="0 0 8 8"><path d="M1 2h6L4 6z" /></svg>
          </div>
        </div>

        <footer class="details">
          <svg class="big-folder" viewBox="0 0 32 46" aria-hidden="true"><path d="M1 3l8-2 4 3v40L1 40z" fill="#f6e49a" /><path d="M9 1l4 3 15 5v31l-15 4z" fill="#ecd67c" /><path d="M12 9l8 2v31l-8 2z" fill="#fbfbf7" stroke="#c8c4b0" /><path d="M20 8l10 3v29l-10 3z" fill="#fdfdfb" stroke="#ccc8b8" /><path d="M12 24l6 1v6l-6 1zM21 24h6v7h-6z" fill="#d4d6d8" /><path d="M14 26h3M22 27q4-3 3 2l-2 3" stroke="#68686c" stroke-width="2" fill="none" /><path d="M1 3l8 3 3 38L1 40z" fill="#f9eba8" /></svg>
          <div class="d-name"><strong>font</strong><span>Папка с файлами</span></div>
          <dl><dt>Дата изменения:</dt><dd>09.10.2014 14:57</dd></dl>
        </footer>
      </div>
    </section>

    <section class="recorder" aria-label="Запись экрана">
      <svg viewBox="0 0 12 12"><path d="M3.500 1.500h7v7h-7zM1.500 4.500h6v6h-6z" fill="none" stroke="#e4e4e4" /></svg>
      <svg viewBox="0 0 12 12"><circle cx="5" cy="5" r="3.500" fill="none" stroke="#f0f0f0" stroke-width="1.300" /><path d="M8 8l3 3" stroke="#f0f0f0" stroke-width="2" /></svg>
      <span>1366x768</span>
      <span>Запись [00:01:01]</span>
      <button aria-label="Меню"><svg viewBox="0 0 12 12"><path d="M1 4h10L6 9z" fill="#fff" /></svg></button>
      <button aria-label="Снимок"><svg class="cam" viewBox="0 0 14 12"><path fill-rule="evenodd" d="M0 3h3l2-2h4l2 2h3v8H0zm7 1a3 3 0 1 0 0 6 3 3 0 0 0 0-6z" fill="#fff" /></svg></button>
      <button aria-label="Пауза"><svg viewBox="0 0 12 12"><path d="M0 2h3v8H0zM5 2h3v8H5z" fill="#a80810" /></svg></button>
      <button aria-label="Стоп"><svg viewBox="0 0 12 12"><path d="M1 2h9v9H1z" fill="#d00814" /></svg></button>
    </section>

    <footer class="taskbar">
      <button class="orb" aria-label="Пуск"><svg viewBox="0 0 36 36"><circle cx="18" cy="18" r="17" fill="url(#gOrb)" stroke="#1c3c54" /><path d="M9 11q5-3 8 0l-1 7q-4-3-8 0z" fill="#f06a30" /><path d="M19 11q4 3 9 0l-2 7q-4 3-8 0z" fill="#90cc48" /><path d="M8 19q4-3 8 0l-2 7q-4-3-7 0z" fill="#58a8f0" /><path d="M18 20q4 3 8 0l-2 7q-4 3-8 0z" fill="#fcd048" /></svg></button>
      <div class="tasks">
        <button v-for="t in tasks" :key="t.name" class="task" :class="{ current: t.current }" :aria-label="t.name">
          <svg v-if="t.icon"><use :href="'#' + t.icon" /></svg>
          <span v-else class="hanzi">完美<br />国际</span>
        </button>
      </div>
      <span class="grow"></span>
      <div class="tray">
        <button aria-label="Скрытые значки"><svg class="caret" viewBox="0 0 8 8"><path d="M0 6h8L4 2z" fill="#fff" /></svg></button>
        <span class="lang">Ru</span>
        <svg v-for="t in tray" :key="t"><use :href="'#' + t" /></svg>
      </div>
      <time class="clock">22:35<br />09.10.2014</time>
      <button class="show-desktop" aria-label="Свернуть все окна"></button>
    </footer>
  </main>
</template>

<style>
html, body { margin: 0; background: #000; }
</style>

<style scoped>
* { box-sizing: border-box; }
button { font: inherit; color: inherit; background: none; border: 0; padding: 0; margin: 0; }
button svg { display: block; }
.defs { position: absolute; width: 0; height: 0; }
.grow { flex: 1; }
.icon16 { width: 16px; height: 16px; flex: none; }
.icon28 { width: 28px; height: 28px; display: block; }
.caret { width: 8px; height: 8px; flex: none; fill: #1e2f48; }

.desktop {
  position: relative; width: 100%; height: 100vh; min-height: 480px; overflow: hidden; background: #000;
  border: solid #d8102c; border-width: 2px 1px 2px 2px;
  font-family: "Open Sans", "Noto Sans", "Noto Sans CJK SC", sans-serif; font-size: 11px; line-height: 14px; color: #000;
}
.shortcuts { display: flex; padding-top: 5px; }
.shortcut-col { width: 70px; flex: none; }
.shortcut { display: flex; flex-direction: column; align-items: center; gap: 5px; width: 66px; height: 85px; color: #fff; }
.shortcut-art { position: relative; }
.arrow-badge { position: absolute; left: 0; bottom: 0; width: 14px; height: 14px; }
.shortcut-label { white-space: pre; text-align: center; }

.net-shortcut { position: absolute; left: 653px; top: 4px; width: 22px; height: 24px; }
.gauge { position: absolute; right: 23px; top: 10px; width: 106px; height: 84px; }

.window { position: absolute; border: 1px solid #8c9298; border-radius: 7px; }
.rar { left: 429px; right: 128px; top: 26px; height: 110px; padding: 0 5px; background: linear-gradient(100deg, #2a2a2a 0, #2c2d2d 30%, #080a0e 46%, #050608 90%, #f0f0f0 97%); }
.rar-title { display: flex; align-items: center; gap: 3px; height: 26px; }
.rar-title h2 { flex: 1; margin: 0; font-size: 11px; font-weight: 400; color: #000; }
.rar-title h2 span { border-radius: 8px; background: #5c5e5e; box-shadow: 0 0 8px 5px #5c5e5e; }
.rar-logo { width: 16px; height: 16px; position: relative; }
.win-buttons { display: flex; align-self: flex-start; border: 1px solid #d4dce4; border-top: 0; border-radius: 0 0 4px 4px; }
.win-buttons button { display: grid; place-items: center; width: 26px; height: 17px; background: linear-gradient(#c0ccda99 45%, #6c7c9099 50%, #9aa8b899); border-right: 1px solid #d4dce4; }
.win-buttons .close { width: 43px; border: 0; background: linear-gradient(#d89484 0, #c04c38 45%, #a82414 50%, #c8543c); border-radius: 0 0 3px 0; }
.win-buttons svg { width: 12px; height: 12px; fill: #fff; stroke: #444c58; stroke-width: 1; paint-order: stroke; }
.win-buttons.dark, .win-buttons.dark button { border-color: #50545a; }
.win-buttons.dark button { background: #14161a66; }
.rar-body { border: 1px solid #24282c; background: #eef1f8; }
.rar-menu { display: flex; gap: 12px; height: 18px; padding-left: 5px; color: #74787e; background: linear-gradient(#fff, #e0e5f2); }
.rar-tools { position: relative; height: 60px; border-top: 1px solid #c0c4c8; background: linear-gradient(#fff 0, #f0f1f4 6px, #989ca0 16px); }
.rar-tools svg { position: absolute; left: 0; top: -3px; width: 100%; height: 60px; }
.rar-tools span { position: absolute; right: 4px; top: 0; color: #444; font-size: 14px; }

.explorer {
  left: 124px; right: 8px; top: 86px; bottom: 36px; display: flex; flex-direction: column; padding: 0 5px 5px 6px; overflow: hidden;
  background: linear-gradient(#5c6268 0, #8a9096 186px, #10151a 192px); border-color: #a8b0b8;
}
.glass { position: absolute; left: 0; top: 0; width: 100%; height: 60px; }
.ex-title { position: relative; display: flex; justify-content: flex-end; height: 31px; }
.address-row { position: relative; display: flex; align-items: center; height: 22px; margin-bottom: 5px; }
.travel { display: flex; align-items: center; gap: 3px; padding-left: 2px; width: 65px; }
.travel svg { width: 24px; height: 24px; }
.travel .recent-btn svg { width: 8px; height: 8px; }
.address { display: flex; flex: 1; align-items: center; height: 22px; border: 1px solid #6c7c90; background: linear-gradient(90deg, #b4b6ba 0, #bcbec4 200px, #e0e9f4 250px, #e8f0fa); }
.addr-icon { width: 16px; height: 16px; margin-left: 2px; }
.crumb-arrow { width: 20px; height: 10px; }
.addr-drop { margin-left: auto; width: 19px; height: 20px; display: grid; place-items: center; }
.addr-drop svg { width: 8px; height: 8px; }
.refresh { width: 23px; height: 20px; display: grid; place-items: center; border-left: 1px solid #6c7c90; }
.refresh svg { width: 14px; height: 14px; }
.search { display: flex; align-items: center; width: 228px; height: 22px; margin-left: 6px; margin-right: 2px; padding: 0 4px 0 7px; border: 1px solid #78889c; background: linear-gradient(90deg, #e4edf8, #dde4ec 45%, #c0c2c4 60%, #bcbec0); }
.search input { flex: 1; min-width: 0; padding: 0; border: 0; outline: 0; background: none; font: italic 11px/14px "Open Sans", sans-serif; }
.search input::placeholder { color: #63686e; opacity: 1; }
.search svg { width: 14px; height: 14px; }

.ex-body { position: relative; flex: 1; min-height: 0; display: flex; flex-direction: column; border: 1px solid #2c3440; background: #fcfcfd; }
.commands { display: flex; align-items: center; gap: 25px; height: 29px; padding: 0 13px 0 16px; color: #1e395b; background: linear-gradient(#fbfdff 0, #eff5fc 48%, #dfe9f6 52%, #dce7f5); border-bottom: 1px solid #b8c6d8; white-space: nowrap; }
.commands button { display: flex; align-items: center; gap: 4px; }
.view-tools { display: flex; align-items: center; gap: 18px; }
.commands .view-btn { gap: 8px; }
.panes { display: flex; flex: 1; min-height: 0; overflow: hidden; }
.tree { width: 149px; padding-top: 9px; flex: none; border-right: 1px solid #e6edf5; background: #fcfcfd; }
.tree-row { display: flex; align-items: center; gap: 4px; height: 20px; padding-left: 17px; overflow: hidden; white-space: nowrap; color: #000; text-decoration: none; }
.tree-row:nth-child(3n) { height: 19px; }
.tree-row.sub { padding-left: 27px; }
.tree-row.active { background: linear-gradient(#f4f4f5, #dcdde0); border: solid #dcdde0; border-width: 1px 0; }
.list { position: relative; flex: 1; min-width: 0; padding-left: 14px; overflow: hidden; }
.sort-mark { position: absolute; left: 130px; top: 1px; width: 6px; height: 3px; }
table { width: 540px; table-layout: fixed; border-collapse: collapse; white-space: nowrap; }
.c-name { width: 242px; } .c-date { width: 113px; } .c-type { width: 113px; } .c-size { width: 72px; }
th { height: 29px; padding: 2px 0 0; vertical-align: top; text-align: left; font-weight: 400; color: #55606e; }
th span { display: block; height: 20px; padding: 3px 5px; border-right: 1px solid #e4ebf4; }
th:first-child span { padding-left: 2px; }
td { height: 20px; padding: 0 5px; color: #6d6d6d; overflow: hidden; }
tr:nth-child(3n) td { height: 19px; }
td.name { color: #000; padding-left: 4px; }
td.name div { display: flex; align-items: center; gap: 4px; }
td.date { font-size: 10px; }
td.size { text-align: right; font-size: 10px; }
.file-icon { width: 14px; height: 16px; flex: none; }
.selected { background: linear-gradient(#dcebfc, #c1dbfc); box-shadow: inset 0 0 0 1px #8fb2dc; }
.hovered { background: linear-gradient(#fafcff, #ebf3fd); box-shadow: inset 0 0 0 1px #b8d6fb; }
.scroll { display: flex; flex-direction: column; align-items: center; width: 16px; flex: none; background: #eeeff1; border-left: 1px solid #e0e2e4; }
.scroll svg { width: 8px; height: 17px; fill: #404448; }
.track { flex: 1; width: 100%; }
.thumb { display: flex; flex-direction: column; justify-content: center; align-items: center; gap: 1px; width: 14px; height: 39%; border: 1px solid #979a9e; border-radius: 2px; background: linear-gradient(90deg, #f8f8f8, #dcdde0 50%, #c8cacd); }
.thumb i { width: 6px; height: 1px; background: #505458; }
.details { display: flex; height: 50px; padding: 2px 18px; border-top: 1px solid #d0d8e4; background: #f0f4fb; color: #5a6779; }
.big-folder { width: 32px; height: 46px; }
.d-name { display: flex; flex-direction: column; width: 97px; padding: 4px 0 0 21px; gap: 3px; white-space: nowrap; }
.d-name strong { font-weight: 400; font-size: 12px; color: #1e2c48; }
.details dl { display: flex; gap: 4px; margin: 0; padding: 4px 0 0 21px; white-space: nowrap; }
.details dd { margin: 0; color: #1e2c58; font-size: 10px; }

.recorder {
  position: absolute; left: 0; top: 0; display: grid; grid-template-columns: 20px 17px 83px 118px 19px 24px 20px 16px; align-items: center;
  height: 18px; width: 326px; padding-left: 5px; color: #e8e8e8; white-space: nowrap;
  background: repeating-linear-gradient(135deg, #0e0e0e 0 2px, #202020 2px 3px);
}
.recorder svg { width: 12px; height: 12px; display: block; }
.recorder .cam { width: 14px; }

.taskbar { position: absolute; left: 0; right: 0; bottom: 0; display: flex; height: 35px; background: linear-gradient(#2c3036 0, #080b10 2px, #06090e); color: #fff; }
.orb { width: 54px; padding-left: 5px; }
.orb svg { width: 36px; height: 36px; }
.tasks { display: flex; gap: 3px; }
.task { display: grid; place-items: center; width: 55px; border: 1px solid #5c6064; border-bottom: 0; border-radius: 3px 3px 0 0; background: linear-gradient(135deg, #54585c 0, #3a3e42 40%, #14181c 60%, #24282c); }
.task svg { width: 32px; height: 28px; }
.task.current { background: linear-gradient(#b4b6b4, #989a98); border-color: #c8ccc8; box-shadow: inset -5px 0 #4c5050; }
.task.current svg { height: 32px; margin-right: 4px; }
.hanzi { font: 900 13px/15px "Liberation Sans", "Noto Sans CJK SC", sans-serif; color: #e8a020; text-shadow: 1px 1px #a02c08, -1px 0 #602008; }
.tray { display: flex; align-items: center; gap: 8px; padding-right: 14px; }
.tray svg { width: 15px; height: 15px; }
.tray .caret { width: 8px; height: 8px; }
.lang { width: 15px; background: #7d8082; text-align: center; font: 11px/15px "Liberation Sans", sans-serif; }
.clock { display: flex; flex-direction: column; justify-content: center; text-align: center; padding-right: 12px; font-size: 10px; line-height: 16px; }
.show-desktop { width: 7px; border-left: 1px solid #484c50; background: linear-gradient(#505458, #181c20); }
</style>
